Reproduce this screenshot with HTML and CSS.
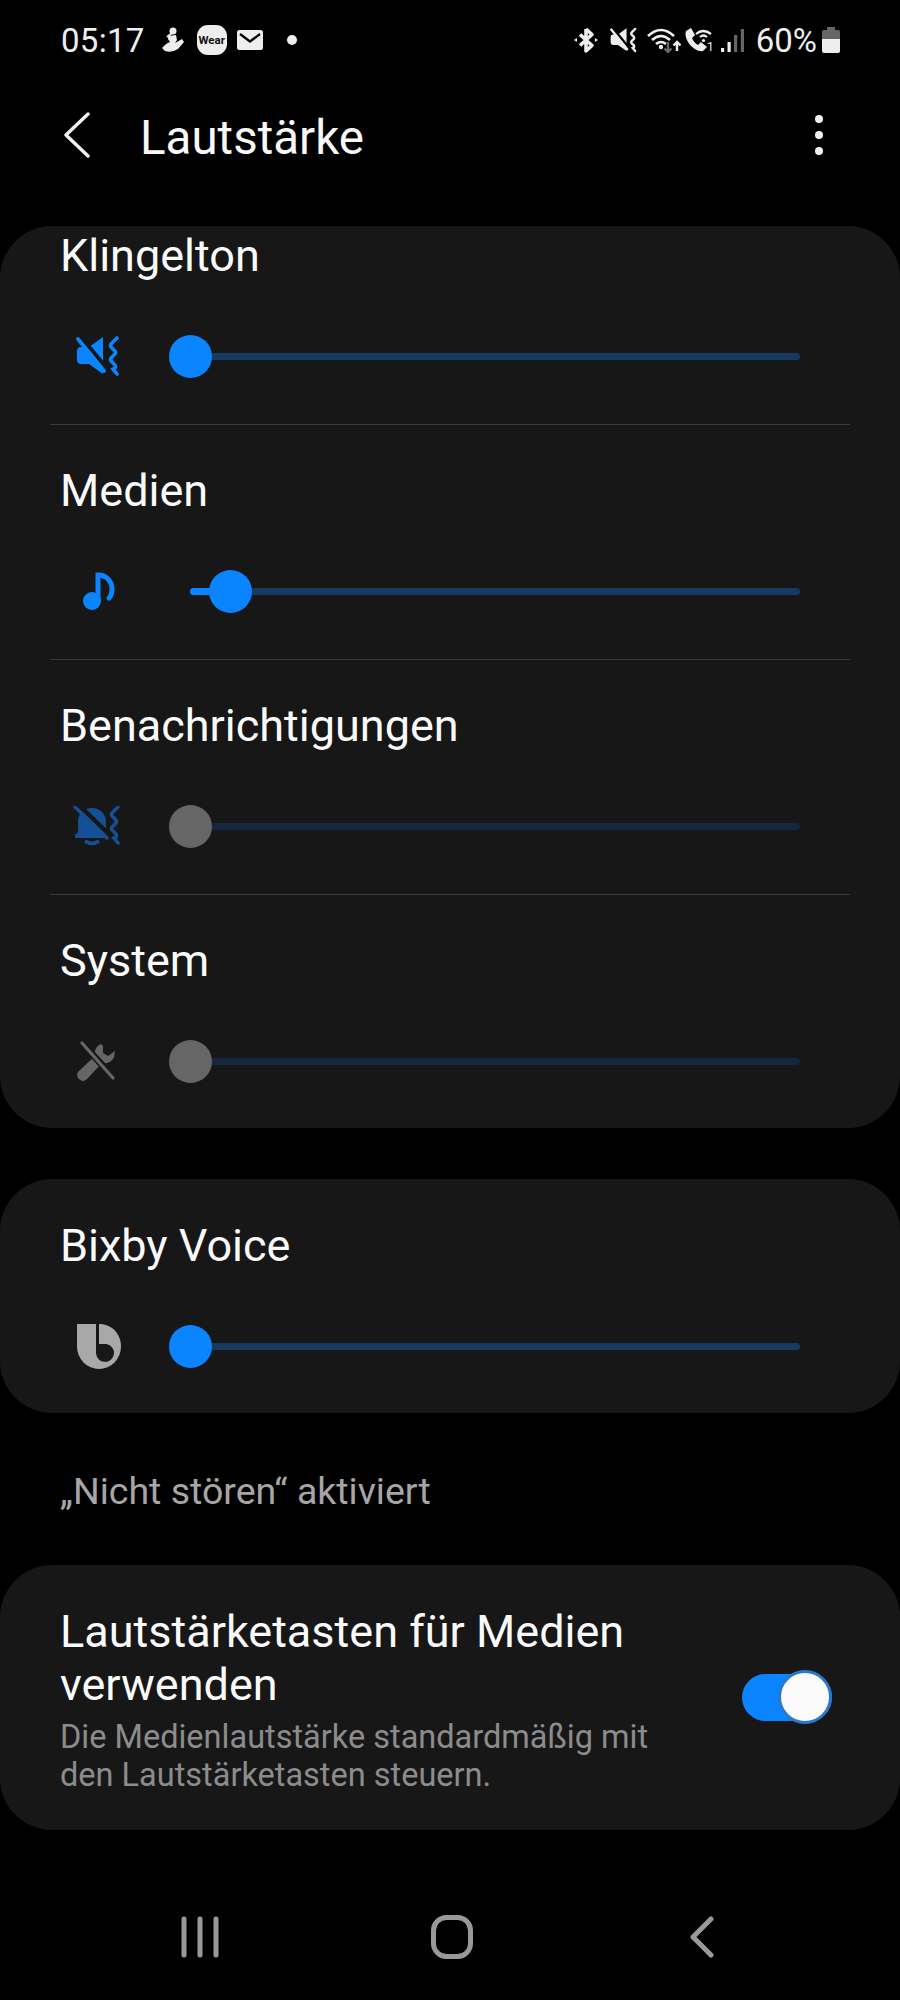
FILE: index.html
```html
<!DOCTYPE html>
<html lang="de">
<head>
<meta charset="utf-8">
<title>Lautstärke</title>
<link rel="stylesheet" href="styles.css">
</head>
<body>
<div class="screen">
  <div class="status">
    <div class="status-left">
      <span class="time">05:17</span>
      <svg class="si-run" viewBox="0 0 23 26"><circle cx="11" cy="4" r="3.500" fill="#eee"/><path d="M5 10l5-4" stroke="#eee" stroke-width="2"/><path d="M6 9l8-1 1 5-2 3 7-4 2 3-6 7q-6 4-13 2l-3-3 4-4 4-2-2-3z" fill="#eee"/></svg>
      <span class="wear">Wear</span>
      <svg class="si-mail" viewBox="0 0 26 20"><rect width="26" height="20" rx="2.500" fill="#eee"/><path d="M3 4l10 7.500L23 4" fill="none" stroke="#000" stroke-width="2.200"/></svg>
      <span class="dot"></span>
    </div>
    <div class="status-right">
      <svg class="si-bt" viewBox="0 0 24 26"><path d="M12 2v22l6-5.500-12-11M12 2l6 5.500-12 11" fill="none" stroke="#eee" stroke-width="3.600" stroke-linejoin="round"/><path d="M0 13l3-2v4zM24 13l-3-2v4z" fill="#eee"/></svg>
      <svg class="si-mute" viewBox="0 0 44 40"><path d="M27 1v37L13 28H5a4 4 0 0 1-4-4V15a4 4 0 0 1 4-4h8z" fill="#eee"/><path d="M0 1l28 34" stroke="#000" stroke-width="4" transform="translate(3 -2.400)"/><path d="M2 3l26 32" stroke="#eee" stroke-width="3.800" stroke-linecap="round"/><path d="M41 2l-6 6q-1 2 0 3l4 4q1 2 0 3l-4 4q-1 2 0 3l4 4q1 2 0 3l-2 1 4 5" fill="none" stroke="#eee" stroke-width="4" stroke-linecap="round"/></svg>
      <svg class="si-wifi" viewBox="0 0 34 26"><path d="M1 9q13-12 26 0M5 13q9-8 18 0M9 17q5-4 10 0" fill="none" stroke="#eee" stroke-width="2.600"/><circle cx="14" cy="20" r="2.200" fill="#eee"/><path d="M21 15v10m-3.500-3.500L21 25l3.500-3.500" fill="none" stroke="#666" stroke-width="2.400"/><path d="M30 24V15m-3.500 3.500L30 15l3.500 3.500" fill="none" stroke="#eee" stroke-width="2.400"/></svg>
      <div class="call-wrap">
        <svg class="si-call" viewBox="0 0 30 26"><path d="M2 4l5-3 4 7-3 3q2 5 6 7l3-3 6 5-4 4C11 26-1 13 2 4z" fill="#eee"/><path d="M12 7q7-6 15 0M16 10q3.500-3 7 0" fill="none" stroke="#eee" stroke-width="2.200"/><circle cx="19.500" cy="13.500" r="1.600" fill="#eee"/></svg>
        <span class="sim">1</span>
      </div>
      <svg class="si-sig" viewBox="0 0 23 26"><rect x="0" y="21" width="3.200" height="4" fill="#eee"/><rect x="6.500" y="15" width="3.200" height="10" fill="#eee"/><rect x="13" y="8" width="3.200" height="17" fill="#666"/><rect x="19.800" y="2" width="3.200" height="23" fill="#666"/></svg>
      <span class="pct">60%</span>
      <svg class="si-bat" viewBox="0 0 18 26"><path d="M5 0h8v3h3a2 2 0 0 1 2 2v7H0V5a2 2 0 0 1 2-2h3z" fill="#666"/><path d="M0 12h18v12a2 2 0 0 1-2 2H2a2 2 0 0 1-2-2z" fill="#eee"/></svg>
    </div>
  </div>

  <header class="appbar">
    <svg class="back" viewBox="0 0 26 46"><path d="M24 2L2 23l22 21" fill="none" stroke="#f2f2f2" stroke-width="3.400" stroke-linecap="round" stroke-linejoin="round"/></svg>
    <h1 class="page-title">Lautstärke</h1>
    <div class="more"><i></i><i></i><i></i></div>
  </header>

  <section class="card card-scroll">
    <div class="row row-first">
      <div class="row-title">Klingelton</div>
      <div class="slider-line">
        <div class="icon-cell">
          <svg class="ic-sound" viewBox="0 0 44 40"><path d="M27 1v37L13 28H5a4 4 0 0 1-4-4V15a4 4 0 0 1 4-4h8z" fill="#0a84ff"/><path d="M0 1l28 34" stroke="#171717" stroke-width="4" transform="translate(3 -2.400)"/><path d="M2 3l26 32" stroke="#0a84ff" stroke-width="3.800" stroke-linecap="round"/><path d="M41 2l-6 6q-1 2 0 3l4 4q1 2 0 3l-4 4q-1 2 0 3l4 4q1 2 0 3l-2 1 4 5" fill="none" stroke="#0a84ff" stroke-width="3.600" stroke-linecap="round"/></svg>
        </div>
        <div class="track"><span class="thumb"></span></div>
      </div>
    </div>
    <div class="row">
      <div class="row-title">Medien</div>
      <div class="slider-line">
        <div class="icon-cell">
          <svg class="ic-note" viewBox="0 0 32 38"><circle cx="9" cy="29" r="9" fill="#0a84ff"/><path d="M15 28V3c9 0 14 7 14 14 0 4-1 7-3 9" fill="none" stroke="#0a84ff" stroke-width="5" stroke-linecap="round"/></svg>
        </div>
        <div class="track"><span class="fill fill-media"></span><span class="thumb thumb-media"></span></div>
      </div>
    </div>
    <div class="row">
      <div class="row-title">Benachrichtigungen</div>
      <div class="slider-line">
        <div class="icon-cell">
          <svg class="ic-bell" viewBox="0 0 47 40"><path d="M19 2c8 0 14 6 14 14v13l2 3H2v-3l3-3V15c0-7 6-13 14-13z" fill="#145096"/><path d="M12 35q7 5 14 0" fill="none" stroke="#145096" stroke-width="3.500"/><path d="M0 -1l34 33" stroke="#171717" stroke-width="4.500" transform="translate(2.800 -2.900)"/><path d="M2 1l32 31" stroke="#145096" stroke-width="3.500" stroke-linecap="round"/><path d="M45 1l-6 6q-1 2 0 3l4 4q1 2 0 3l-4 4q-1 2 0 3l4 4q1 2 0 3l-2 1 4 5" fill="none" stroke="#145096" stroke-width="3.600" stroke-linecap="round"/></svg>
        </div>
        <div class="track track-off"><span class="thumb thumb-off"></span></div>
      </div>
    </div>
    <div class="row">
      <div class="row-title">System</div>
      <div class="slider-line">
        <div class="icon-cell">
          <svg class="ic-tools" viewBox="0 0 38 40"><path d="M24 3c-5 2-7 7-6 12L2 30c-3 3-2 6 0 8s5 3 8 0l15-16c5 1 10-1 12-6l1-6-7 5-5-3V5z" fill="#666"/><path d="M5 2l32 35" stroke="#171717" stroke-width="7"/><path d="M5 2l31 35" stroke="#666" stroke-width="3.200" stroke-linecap="round"/></svg>
        </div>
        <div class="track track-off"><span class="thumb thumb-off"></span></div>
      </div>
    </div>
  </section>

  <section class="card card-bixby">
    <div class="row row-solo">
      <div class="row-title">Bixby Voice</div>
      <div class="slider-line">
        <div class="icon-cell">
          <svg class="ic-bixby" viewBox="0 0 44 45"><path d="M0 0h22c13 0 22 10 22 22.500a22 22.500 0 0 1-44 0z" fill="#a8a8a8"/><path d="M19 0h3v20h7.500a9 9 0 1 1-10.500 9z" fill="#171717"/></svg>
        </div>
        <div class="track"><span class="thumb"></span></div>
      </div>
    </div>
  </section>

  <p class="note">„Nicht stören“ aktiviert</p>

  <section class="card card-toggle">
    <div class="toggle-text">
      <div class="toggle-title">Lautstärketasten für Medien verwenden</div>
      <div class="toggle-sub">Die Medienlautstärke standardmäßig mit den Lautstärketasten steuern.</div>
    </div>
    <div class="switch"><span class="knob"></span></div>
  </section>

  <nav class="navbar">
    <svg class="nav-recent" viewBox="0 0 38 42"><path d="M3 3v36M19 3v36M35 3v36" stroke="#999" stroke-width="5" stroke-linecap="round"/></svg>
    <svg class="nav-home" viewBox="0 0 42 44"><rect x="2.500" y="2.500" width="37" height="39" rx="13" fill="none" stroke="#999" stroke-width="5"/></svg>
    <svg class="nav-back" viewBox="0 0 24 42"><path d="M21 3L3 21l18 18" fill="none" stroke="#999" stroke-width="5" stroke-linecap="round" stroke-linejoin="round"/></svg>
  </nav>
</div>
</body>
</html>
```

FILE: styles.css
```css
* { box-sizing: border-box; }
html, body { margin: 0; padding: 0; background: #000; }
body { font-family: Roboto, "Noto Sans", sans-serif; color: #f5f5f5; }

.screen { width: 900px; height: 2000px; display: flex; flex-direction: column; overflow: hidden; background: #000; }

.status { height: 80px; display: flex; align-items: center; justify-content: space-between; padding: 0 60px 0 61px; }
.status-left, .status-right { display: flex; align-items: center; }
.time { font-size: 33px; color: #eee; margin-right: 17px; letter-spacing: 0.3px; }
.si-run { width: 23px; height: 26px; margin-right: 12px; }
.wear { width: 30px; height: 30px; border-radius: 11px; background: #eee; color: #111; font-size: 11.500px; font-weight: 700; display: flex; align-items: center; justify-content: center; margin-right: 10px; }
.si-mail { width: 26px; height: 20px; margin-right: 24px; }
.dot { width: 10px; height: 10px; border-radius: 50%; background: #eee; }
.si-bt { width: 24px; height: 26px; margin-right: 12px; }
.si-mute { width: 27px; height: 26px; margin-right: 10px; }
.si-wifi { width: 34px; height: 26px; margin-right: 3px; }
.call-wrap { position: relative; width: 30px; height: 26px; margin-right: 7px; }
.si-call { display: block; width: 30px; height: 26px; }
.sim { position: absolute; right: 0; bottom: 0; font-size: 12px; line-height: 12px; color: #eee; }
.si-sig { width: 23px; height: 26px; margin-right: 12px; }
.pct { font-size: 33px; color: #eee; margin-right: 5px; }
.si-bat { width: 18px; height: 26px; }

.appbar { height: 146px; display: flex; align-items: center; padding: 0 77px 36px 64px; }
.back { width: 26px; height: 46px; margin-right: 50px; }
.page-title { flex: 1; margin: 0; padding-top: 5px; font-size: 47.500px; font-weight: 400; color: #f8f8f8; }
.more { display: flex; flex-direction: column; gap: 8px; }
.more i { display: block; width: 8px; height: 8px; border-radius: 50%; background: #f0f0f0; }

.card { background: #171717; border-radius: 52px; padding: 0 50px; }
.card-scroll { height: 902px; }
.card-bixby { margin-top: 51px; height: 234px; }
.row { height: 235px; padding-top: 42px; border-top: 1px solid #3a3a3a; }
.row-first { height: 198px; padding-top: 6px; border-top: 0; }
.row-solo { height: 234px; padding-top: 43px; border-top: 0; }
.row-title { height: 48px; line-height: 48px; font-size: 45px; padding-left: 10px; color: #fafafa; }
.slider-line { display: flex; align-items: center; height: 60px; margin-top: 46px; }
.icon-cell { width: 119px; padding-left: 24px; display: flex; align-items: center; height: 60px; }

.ic-sound { width: 44px; height: 40px; margin-left: 2px; }
.ic-note { width: 32px; height: 38px; margin-left: 9px; }
.ic-bell { width: 47px; height: 40px; margin-left: -1px; }
.ic-tools { width: 38px; height: 40px; margin-left: 3px; }
.ic-bixby { width: 44px; height: 45px; margin-left: 3px; }

.track { position: relative; width: 610px; margin-left: 21px; height: 7px; border-radius: 4px; background: #173a63; }
.track-off { background: #15273d; }
.thumb { position: absolute; left: -21px; top: -18px; width: 43px; height: 43px; border-radius: 50%; background: #0a84ff; }
.thumb-off { background: #666; }
.thumb-media { left: 19px; }
.fill { position: absolute; left: 0; top: 0; height: 7px; border-radius: 4px; background: #0a84ff; }
.fill-media { width: 40px; }

.note { margin: 56px 0 0; height: 45px; line-height: 45px; padding-left: 60px; font-size: 37.500px; color: #a6a6a6; }

.card-toggle { margin-top: 51px; height: 265px; padding: 40px 48px 0 60px; display: flex; }
.toggle-text { width: 610px; }
.toggle-title { font-size: 45px; line-height: 53px; color: #fafafa; }
.toggle-sub { font-size: 32.500px; line-height: 38px; color: #8c8c8c; margin-top: 7px; }
.switch { position: relative; width: 90px; height: 47px; border-radius: 24px; background: #0a84ff; margin: 69px 0 0 72px; flex: none; }
.knob { position: absolute; right: 0; top: -4px; width: 54px; height: 54px; border-radius: 50%; background: #fbfbfb; border: 3px solid #2a78d0; }

.navbar { margin-top: 85px; display: flex; align-items: center; justify-content: space-between; padding: 0 186px 0 181px; }
.nav-recent { width: 38px; height: 42px; }
.nav-home { width: 42px; height: 44px; margin-right: 5px; }
.nav-back { width: 24px; height: 42px; }
```
